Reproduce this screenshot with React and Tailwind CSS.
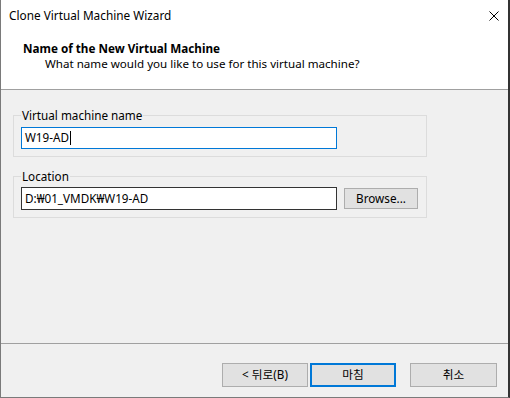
const FONT = { fontFamily: '"Noto Sans", "Noto Sans CJK KR", sans-serif' }

function GroupBox({ label, children, className = '' }) {
  return (
    <div className={`relative border border-[#dcdcdc] h-[42px] w-[414px] ${className}`}>
      <span className="absolute left-[7px] -top-[9px] px-px bg-[#f0f0f0] text-[11.7px] leading-[16px] text-black">
        {label}
      </span>
      {children}
    </div>
  )
}

function Button({ children, primary, className = '' }) {
  return (
    <button
      className={`h-[24px] bg-[#e1e1e1] text-[11.7px] text-black flex items-center justify-center ${
        primary ? 'border-2 border-[#0078d7]' : 'border border-[#adadad]'
      } ${className}`}
    >
      {children}
    </button>
  )
}

export default function App() {
  return (
    <div
      style={FONT}
      className="w-[510px] h-[398px] flex flex-col bg-[#f0f0f0] border-l border-b border-[#7a7a7a] border-r-2 border-r-[#333] text-black"
    >
      {/* Title bar */}
      <div className="h-[31px] bg-white flex items-center justify-between pl-[8px] pr-[9px] shrink-0">
        <span className="text-[11.8px] leading-none">Clone Virtual Machine Wizard</span>
        <svg width="10" height="10" viewBox="0 0 10 10">
          <path d="M0.5 0.5 L9.5 9.5 M9.5 0.5 L0.5 9.5" stroke="#000" strokeWidth="1" />
        </svg>
      </div>

      {/* Header */}
      <div className="h-[59px] bg-white border-b border-[#a0a0a0] pl-[22px] pt-[10px] shrink-0">
        <div className="text-[11.7px] font-bold leading-[15px]">Name of the New Virtual Machine</div>
        <div className="text-[11.6px] leading-[15px] pl-[22px]">What name would you like to use for this virtual machine?</div>
      </div>

      {/* Body */}
      <div className="flex-1 flex flex-col pl-[12px]">
        <GroupBox label="Virtual machine name" className="mt-[25px]">
          <div className="absolute left-[7px] top-[11px] w-[316px] h-[22px] bg-white border border-[#0078d7] flex items-center pl-[3px] text-[11.7px]">
            W19-AD
            <span className="w-px h-[14px] bg-black ml-px" />
          </div>
        </GroupBox>

        <GroupBox label="Location" className="mt-[19px]">
          <div className="absolute left-[7px] top-[10px] w-[316px] h-[23px] bg-white border border-[#333] flex items-center pl-[3px] text-[11.7px]">
            D:₩01_VMDK₩W19-AD
          </div>
          <Button className="absolute left-[330px] top-[11px] w-[74px] !h-[21px]">Browse...</Button>
        </GroupBox>
      </div>

      {/* Footer */}
      <div className="h-[54px] border-t border-[#a0a0a0] shrink-0 flex items-start justify-end pt-[19px] pr-[11px]">
        <Button className="w-[86px]">{'< 뒤로(B)'}</Button>
        <Button primary className="w-[86px] ml-[2px]">마침</Button>
        <Button className="w-[87px] ml-[14px]">취소</Button>
      </div>
    </div>
  )
}
